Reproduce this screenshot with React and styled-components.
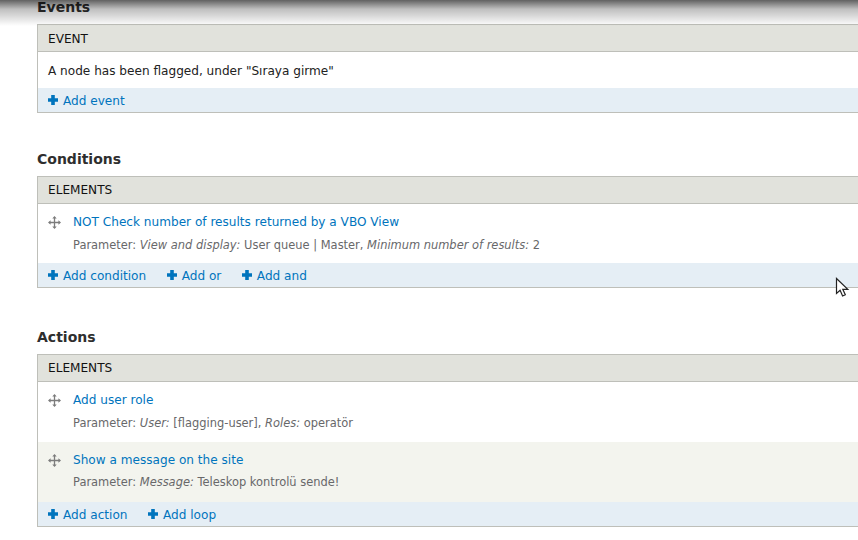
import React from "react";
import styled, { createGlobalStyle } from "styled-components";

const GlobalStyle = createGlobalStyle`
  html, body {
    margin: 0;
    padding: 0;
    background: #fff;
    overflow: hidden;
  }
  body {
    font-family: "DejaVu Sans", sans-serif;
    font-size: 13px;
    color: #2b2b2b;
  }
`;

const Page = styled.div`
  position: relative;
  width: 858px;
  height: 540px;
  overflow: hidden;
  padding-left: 37px;
  box-sizing: border-box;
`;

const TopShadow = styled.div`
  position: absolute;
  top: 0;
  left: 0;
  right: 0;
  height: 26px;
  background: linear-gradient(to bottom, rgba(0, 0, 0, 0.62), rgba(0, 0, 0, 0.25) 35%, rgba(0, 0, 0, 0));
  pointer-events: none;
`;

const Section = styled.section`
  margin-bottom: ${({ $gap }) => $gap}px;
  &:first-of-type {
    margin-top: -1px;
  }
`;

const Heading = styled.h3`
  margin: 0 0 8px;
  font-size: 14px;
  line-height: 17px;
  font-weight: bold;
  color: #2e2e2e;
`;

const Table = styled.div`
  width: 860px;
  border: 1px solid #bebfb9;
  box-sizing: border-box;
`;

const TableHead = styled.div`
  height: 26px;
  line-height: ${({ $lineHeight }) => $lineHeight}px;
  padding-left: 10px;
  background: #e1e2dc;
  border-bottom: 1px solid #bebfb9;
  font-size: 12.1px;
  color: #111;
`;

const EventRow = styled.div`
  height: 36px;
  line-height: 39px;
  padding-left: 10px;
  font-size: 12.1px;
  color: #222;
`;

const ElementRow = styled.div`
  display: flex;
  height: ${({ $height }) => $height}px;
  padding-left: 10px;
  box-sizing: border-box;
  background: ${({ $shaded }) => ($shaded ? "#f3f4ee" : "#fff")};
`;

const Handle = styled.svg`
  flex: none;
  width: 13px;
  height: 13px;
  margin: 12px 12px 0 0;
`;

const ElementBody = styled.div`
  padding-top: 10px;
`;

const ElementLink = styled.a`
  display: block;
  line-height: 17px;
  font-size: 12.1px;
  color: #0074bd;
`;

const Param = styled.div`
  margin-top: ${({ $gap }) => $gap}px;
  line-height: 14px;
  font-size: 11.45px;
  color: #68686a;
`;

const ActionBar = styled.div`
  display: flex;
  align-items: center;
  gap: 20.5px;
  height: 24px;
  padding-left: 10px;
  background: #e5eef5;
`;

const AddLink = styled.a`
  display: flex;
  align-items: center;
  gap: 5px;
  font-size: 12.1px;
  color: #0074bd;
`;

const AddLabel = styled.span`
  padding-top: 2px;
`;

const Cursor = styled.svg`
  position: absolute;
  left: 835px;
  top: 277px;
  width: 15px;
  height: 22px;
`;

function MoveHandle() {
  return (
    <Handle viewBox="0 0 13 13">
      <path d="M6.5 1.5v10M1.5 6.5h10" stroke="#7c7c7c" strokeWidth="1.3" fill="none" />
      <path d="M6.5 0l2.2 2.6H4.3zM6.5 13l2.2-2.6H4.3zM0 6.5l2.6-2.2v4.4zM13 6.5l-2.6-2.2v4.4z" fill="#7c7c7c" />
    </Handle>
  );
}

function PlusIcon() {
  return (
    <svg width="10" height="10" viewBox="0 0 10 10">
      <path d="M3.2 0h3.6v3.2H10v3.6H6.8V10H3.2V6.8H0V3.2h3.2z" fill="#0074bd" />
    </svg>
  );
}

function Add({ children }) {
  return (
    <AddLink>
      <PlusIcon />
      <AddLabel>{children}</AddLabel>
    </AddLink>
  );
}

function Element({ title, shaded, height = 60, gap = 7, children }) {
  return (
    <ElementRow $shaded={shaded} $height={height}>
      <MoveHandle />
      <ElementBody>
        <ElementLink>{title}</ElementLink>
        <Param $gap={gap}>{children}</Param>
      </ElementBody>
    </ElementRow>
  );
}

export default function App() {
  return (
    <Page>
      <GlobalStyle />
      <Section $gap={38}>
        <Heading>Events</Heading>
        <Table>
          <TableHead $lineHeight={29}>EVENT</TableHead>
          <EventRow>A node has been flagged, under "Sıraya girme"</EventRow>
          <ActionBar>
            <Add>Add event</Add>
          </ActionBar>
        </Table>
      </Section>
      <Section $gap={41}>
        <Heading>Conditions</Heading>
        <Table>
          <TableHead $lineHeight={27}>ELEMENTS</TableHead>
          <Element title="NOT Check number of results returned by a VBO View" height={59}>
            Parameter: <em>View and display:</em> User queue | Master, <em>Minimum number of results:</em> 2
          </Element>
          <ActionBar>
            <Add>Add condition</Add>
            <Add>Add or</Add>
            <Add>Add and</Add>
          </ActionBar>
        </Table>
      </Section>
      <Section $gap={0}>
        <Heading>Actions</Heading>
        <Table>
          <TableHead $lineHeight={27}>ELEMENTS</TableHead>
          <Element title="Add user role">
            Parameter: <em>User:</em> [flagging-user], <em>Roles:</em> operatör
          </Element>
          <Element title="Show a message on the site" shaded gap={6}>
            Parameter: <em>Message:</em> Teleskop kontrolü sende!
          </Element>
          <ActionBar>
            <Add>Add action</Add>
            <Add>Add loop</Add>
          </ActionBar>
        </Table>
      </Section>
      <TopShadow />
      <Cursor viewBox="0 0 15 22">
        <path d="M1.5 1.5v15l3.6-3.2 2.5 5.7 2.7-1.2-2.5-5.5h5z" fill="#fff" stroke="#222" strokeWidth="1.2" />
      </Cursor>
    </Page>
  );
}
